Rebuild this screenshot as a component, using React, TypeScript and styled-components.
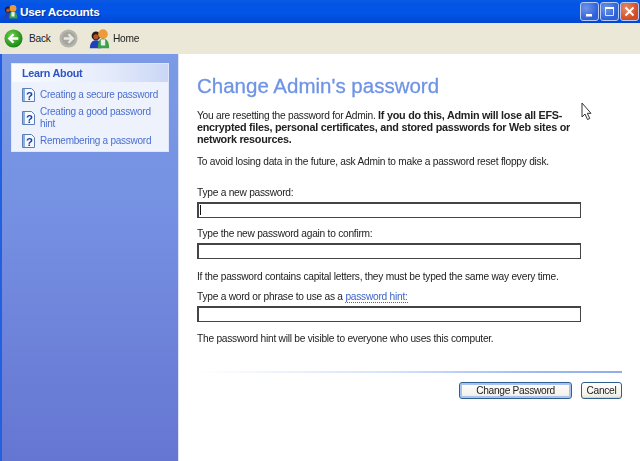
import React from 'react';
import styled, { createGlobalStyle } from 'styled-components';

const GlobalStyle = createGlobalStyle`
  html, body {
    margin: 0;
    padding: 0;
    width: 640px;
    height: 461px;
    overflow: hidden;
    background: #fff;
  }
  * {
    box-sizing: border-box;
  }
`;

// the reference is a scaled-up capture, so everything is slightly soft
const Win = styled.div`
  position: relative;
  width: 640px;
  height: 461px;
  display: flex;
  flex-direction: column;
  font-family: 'Liberation Sans', Arial, sans-serif;
  font-size: 10.2px;
  letter-spacing: -0.25px;
  color: #222;
  overflow: hidden;
  filter: blur(0.35px);
`;

const TitleBar = styled.div`
  height: 23px;
  flex: none;
  display: flex;
  align-items: center;
  justify-content: space-between;
  padding: 0 1px 0 3px;
  background: linear-gradient(180deg, #0a5be0 0%, #0353e6 18%, #0255e8 60%, #0246d0 100%);
`;

const TitleLeft = styled.div`
  display: flex;
  align-items: center;
  gap: 2px;
`;

const TitleText = styled.span`
  color: #fff;
  font-size: 11.8px;
  font-weight: 700;
  text-shadow: 1px 1px 1px #0b2f9c;
`;

const WinButtons = styled.div`
  display: flex;
  gap: 1px;
`;

const WinButton = styled.div<{ $close?: boolean }>`
  width: 19px;
  height: 19px;
  display: flex;
  align-items: center;
  justify-content: center;
  border: 1px solid #b9cbf3;
  border-radius: 3px;
  background: ${({ $close }) =>
    $close
      ? 'radial-gradient(circle at 30% 30%, #e88a6a, #d14a20 70%)'
      : 'radial-gradient(circle at 30% 30%, #6f95ea, #2c5fd8 70%)'};
`;

const Toolbar = styled.div`
  height: 31px;
  flex: none;
  display: flex;
  align-items: center;
  padding-left: 4px;
  background: #ebe8d8;
`;

const NavLabel = styled.span`
  color: #222;
`;

const BackGroup = styled.div`
  display: flex;
  align-items: center;
  gap: 6px;
  width: 55px;
`;

const HomeGroup = styled.div`
  display: flex;
  align-items: center;
  gap: 3px;
  margin-left: 11px;
`;

const Body = styled.div`
  flex: 1;
  display: flex;
  min-height: 0;
`;

const Sidebar = styled.div`
  width: 179px;
  flex: none;
  padding: 9px 0 0 9px;
  background: linear-gradient(180deg, #7b9be6 0%, #7590e2 40%, #6c80d8 75%, #6576d2 100%);
  border-left: 2px solid #2260e2;
  border-right: 1px solid #dfe3fa;
`;

const LearnBox = styled.div`
  width: 158px;
  height: 89px;
  background: #eef2fc;
  border: 1px solid #dfe6fa;
`;

const LearnHeader = styled.div`
  height: 18px;
  padding-left: 10px;
  display: flex;
  align-items: center;
  font-size: 10.8px;
  font-weight: 700;
  color: #2d55c4;
  background: linear-gradient(90deg, #fbfcff 0%, #e6ecfb 60%, #c9d6f5 100%);
`;

const LearnList = styled.div`
  display: flex;
  flex-direction: column;
  padding: 6px 4px 0 10px;
  gap: 4px;
`;

const LearnItem = styled.div`
  display: flex;
  align-items: center;
  gap: 5px;
  color: #4a6fd0;
  font-size: 10px;
  line-height: 12px;
`;

const Main = styled.div`
  flex: 1;
  min-width: 0;
  padding: 18px 18px 0 18px;
  background: #fff;
  display: flex;
  flex-direction: column;
`;

const Heading = styled.h1`
  margin: 0;
  height: 27px;
  font-size: 20.5px;
  line-height: 27px;
  font-weight: 400;
  letter-spacing: 0;
  -webkit-text-stroke: 0.3px #6f94e6;
  color: #6f94e6;
`;

const Para = styled.p<{ $top: number }>`
  margin: ${({ $top }) => $top}px 0 0;
  width: 385px;
  line-height: 12px;
  color: #222;

  b {
    font-size: 10.8px;
    line-height: 0;
  }
`;

const Label = styled.div<{ $top: number }>`
  margin-top: ${({ $top }) => $top}px;
  line-height: 12px;
  color: #222;
`;

const HintLink = styled.span`
  color: #3d64c8;
  border-bottom: 1px dotted #3d64c8;
`;

const Field = styled.div`
  width: 384px;
  height: 16px;
  margin-top: 3px;
  border: 1px solid #444;
  border-top-width: 2px;
  border-left-width: 2px;
  background: #fff;
  padding: 0 0 0 1px;
`;

const Caret = styled.div`
  width: 1px;
  height: 10px;
  margin-top: 1px;
  background: #111;
`;

const Divider = styled.div`
  width: 425px;
  height: 2px;
  margin-top: 26px;
  background: linear-gradient(90deg, #ffffff 0%, #d6e3fa 45%, #9dbaf2 80%, #8fadf0 100%);
`;

const Actions = styled.div`
  display: flex;
  justify-content: flex-end;
  gap: 9px;
  margin-top: 9px;
  width: 425px;
`;

const ActionButton = styled.button<{ $wide?: boolean; $primary?: boolean }>`
  width: ${({ $wide }) => ($wide ? 113 : 41)}px;
  height: 17px;
  padding: 0;
  font-family: inherit;
  font-size: 10.2px;
  letter-spacing: -0.3px;
  line-height: 13px;
  color: #222;
  border: 1px solid #2f5f8f;
  border-radius: 3px;
  background: linear-gradient(180deg, #ffffff 0%, #f3f2ea 80%, #e4e2d4 100%);
  box-shadow: ${({ $primary }) =>
    $primary ? 'inset 0 0 0 2px #a9c3ee' : 'inset 0 -1px 0 #d8d5c4'};
`;

const CursorMark = styled.svg`
  position: absolute;
  left: 581px;
  top: 102px;
`;

const PeopleIcon = ({ size }: { size: number }) => (
  <svg width={size} height={size} viewBox="0 0 24 24">
    <circle cx="8" cy="9" r="5" fill="#2a1d18" />
    <circle cx="8" cy="10" r="3" fill="#b0552a" />
    <path d="M1 23c0-6 3-9 7-9s6 3 6 9z" fill="#2340b8" />
    <circle cx="16" cy="7" r="5.500" fill="#ee9a3c" />
    <path d="M10 23c0-8 2-11 6-11s7 3 7 11z" fill="#3aa04a" />
    <rect x="13.500" y="13" width="5" height="7" fill="#e8f0e8" />
  </svg>
);

const BackIcon = () => (
  <svg width="19" height="19" viewBox="0 0 20 20">
    <defs>
      <radialGradient id="backFill" cx="40%" cy="35%" r="70%">
        <stop offset="0%" stopColor="#6fd04f" />
        <stop offset="100%" stopColor="#12830f" />
      </radialGradient>
    </defs>
    <circle cx="10" cy="10" r="9.500" fill="url(#backFill)" />
    <path d="M15 10H6M10 5.500 5.500 10l4.500 4.500" fill="none" stroke="#fff" strokeWidth="2.400" />
  </svg>
);

const ForwardIcon = () => (
  <svg width="19" height="19" viewBox="0 0 20 20">
    <circle cx="10" cy="10" r="9.500" fill="#b5b5ad" />
    <circle cx="10" cy="10" r="7" fill="#a6a69f" />
    <path d="M5 10h9M10 5.500 14.500 10 10 14.500" fill="none" stroke="#e8e8e2" strokeWidth="2.400" />
  </svg>
);

const HelpIcon = () => (
  <svg width="13" height="14" viewBox="0 0 13 14" style={{ flex: 'none' }}>
    <path d="M.5.500h9l3 3v10H.500z" fill="#f5f8ff" stroke="#5a7fb8" />
    <path d="M1 1h2V13H1z" fill="#8fb0dc" />
    <text x="4" y="11.500" fontSize="11.500" fontWeight="700" fontFamily="'Liberation Sans', sans-serif" fill="#1c3f9c">
      ?
    </text>
  </svg>
);

const helpLinks = ['Creating a secure password', 'Creating a good password hint', 'Remembering a password'];

export default function App() {
  return (
    <>
      <GlobalStyle />
      <Win>
        <TitleBar>
          <TitleLeft>
            <PeopleIcon size={15} />
            <TitleText>User Accounts</TitleText>
          </TitleLeft>
          <WinButtons>
            <WinButton>
              <svg width="11" height="11" viewBox="0 0 11 11">
                <rect x="2" y="8" width="6" height="2.500" fill="#fff" />
              </svg>
            </WinButton>
            <WinButton>
              <svg width="11" height="11" viewBox="0 0 11 11">
                <path d="M1.500 2.500h8v7h-8z" fill="none" stroke="#dfe8fb" />
                <rect x="1" y="1" width="9" height="2" fill="#fff" />
              </svg>
            </WinButton>
            <WinButton $close>
              <svg width="11" height="11" viewBox="0 0 11 11">
                <path d="M1.500 1.500l8 8M9.500 1.500l-8 8" stroke="#fff" strokeWidth="2" />
              </svg>
            </WinButton>
          </WinButtons>
        </TitleBar>
        <Toolbar>
          <BackGroup>
            <BackIcon />
            <NavLabel>Back</NavLabel>
          </BackGroup>
          <ForwardIcon />
          <HomeGroup>
            <PeopleIcon size={21} />
            <NavLabel>Home</NavLabel>
          </HomeGroup>
        </Toolbar>
        <Body>
          <Sidebar>
            <LearnBox>
              <LearnHeader>Learn About</LearnHeader>
              <LearnList>
                {helpLinks.map((link) => (
                  <LearnItem key={link}>
                    <HelpIcon />
                    <span>{link}</span>
                  </LearnItem>
                ))}
              </LearnList>
            </LearnBox>
          </Sidebar>
          <Main>
            <Heading>Change Admin's password</Heading>
            <Para $top={11}>
              You are resetting the password for Admin.{' '}
              <b>
                If you do this, Admin will lose all EFS-encrypted files, personal certificates, and stored passwords for
                Web sites or network resources.
              </b>
            </Para>
            <Para $top={10}>To avoid losing data in the future, ask Admin to make a password reset floppy disk.</Para>
            <Label $top={19}>Type a new password:</Label>
            <Field>
              <Caret />
            </Field>
            <Label $top={10}>Type the new password again to confirm:</Label>
            <Field />
            <Para $top={12}>If the password contains capital letters, they must be typed the same way every time.</Para>
            <Label $top={8}>
              Type a word or phrase to use as a <HintLink>password hint:</HintLink>
            </Label>
            <Field />
            <Para $top={11}>The password hint will be visible to everyone who uses this computer.</Para>
            <Divider />
            <Actions>
              <ActionButton $wide $primary>
                Change Password
              </ActionButton>
              <ActionButton>Cancel</ActionButton>
            </Actions>
          </Main>
        </Body>
        <CursorMark width="12" height="19" viewBox="0 0 12 19">
          <path d="M1 1v14l3-3 2.500 5.500 2.300-1-2.500-5.200H10z" fill="#fff" stroke="#333" strokeWidth="1" />
        </CursorMark>
      </Win>
    </>
  );
}
